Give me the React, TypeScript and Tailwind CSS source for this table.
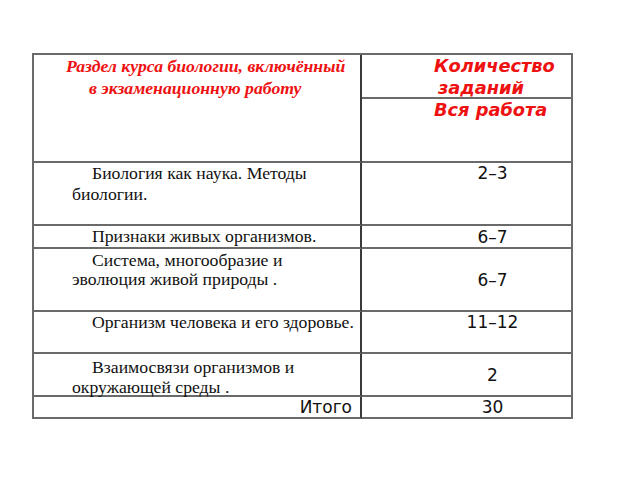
import React from "react";

const serif = "font-['Liberation_Serif','Times_New_Roman',serif]";
const sans = "font-['DejaVu_Sans','Verdana',sans-serif]";

export default function App() {
  return (
    <div className="w-[640px] h-[480px] bg-white pt-[53px] pl-[32px]">
      <div className="grid w-[541px] grid-cols-[328px_211px] grid-rows-[44px_64px_63px_23px_63px_42px_43px_22px] border-t-2 border-l-2 border-[#6a6a6a] text-[#111]">
        {/* header left */}
        <div className={`row-span-2 border-r-2 border-b-2 border-r-[#3a3a3a] border-b-[#6a6a6a] ${serif} text-[17.7px] leading-[22px] font-bold italic text-[#ee1111]`}>
          <div className="pl-[32px] whitespace-nowrap">Раздел курса биологии, включённый</div>
          <div className="pl-[55px] whitespace-nowrap">в экзаменационную работу</div>
        </div>
        {/* header right top */}
        <div className={`border-r-2 border-b-2 border-[#6a6a6a] ${sans} text-[17.8px] leading-[22px] font-bold italic text-[#ee1111] pl-[72px]`}>
          <div>Количество</div>
          <div className="pl-[4px]">заданий</div>
        </div>
        {/* header right bottom */}
        <div className={`border-r-2 border-b-2 border-[#6a6a6a] ${sans} text-[17.8px] leading-[22px] font-bold italic text-[#ee1111] pl-[72px]`}>
          Вся работа
        </div>

        {/* row 1 */}
        <div className={`border-r-2 border-b-2 border-r-[#3a3a3a] border-b-[#6a6a6a] ${serif} text-[17.7px] leading-[21px] pl-[38px] pr-[4px] indent-[20px]`}>
          Биология как наука. Методы биологии.
        </div>
        <div className={`border-r-2 border-b-2 border-[#6a6a6a] ${sans} text-[17px] leading-[20px] text-center pl-[52px]`}>
          2–3
        </div>

        {/* row 2 */}
        <div className={`border-r-2 border-b-2 border-r-[#3a3a3a] border-b-[#6a6a6a] ${serif} text-[17.7px] leading-[21px] pl-[38px] indent-[20px] flex items-center`}>
          <span>Признаки живых организмов.</span>
        </div>
        <div className={`border-r-2 border-b-2 border-[#6a6a6a] ${sans} text-[17px] leading-[20px] pl-[52px] flex items-center justify-center`}>
          6–7
        </div>

        {/* row 3 */}
        <div className={`border-r-2 border-b-2 border-r-[#3a3a3a] border-b-[#6a6a6a] ${serif} text-[17.7px] leading-[19px] pl-[38px] pr-[60px] indent-[20px] pt-[2px]`}>
          Система, многообразие и эволюция живой природы .
        </div>
        <div className={`border-r-2 border-b-2 border-[#6a6a6a] ${sans} text-[17px] leading-[20px] pl-[52px] flex items-center justify-center`}>
          6–7
        </div>

        {/* row 4 */}
        <div className={`border-r-2 border-b-2 border-r-[#3a3a3a] border-b-[#6a6a6a] ${serif} text-[17.7px] leading-[21px] pl-[58px] whitespace-nowrap`}>
          Организм человека и его здоровье.
        </div>
        <div className={`border-r-2 border-b-2 border-[#6a6a6a] ${sans} text-[17px] leading-[20px] text-center pl-[52px]`}>
          11–12
        </div>

        {/* row 5 */}
        <div className={`border-r-2 border-b-2 border-r-[#3a3a3a] border-b-[#6a6a6a] ${serif} text-[17.7px] leading-[20px] pl-[38px] pr-[60px] indent-[20px] pt-[3px]`}>
          Взаимосвязи организмов и окружающей среды .
        </div>
        <div className={`border-r-2 border-b-2 border-[#6a6a6a] ${sans} text-[17px] leading-[20px] pl-[52px] flex items-center justify-center`}>
          2
        </div>

        {/* total */}
        <div className={`border-r-2 border-b-2 border-r-[#3a3a3a] border-b-[#6a6a6a] ${sans} text-[17px] leading-[20px] text-right pr-[8px] flex items-center justify-end`}>
          Итого
        </div>
        <div className={`border-r-2 border-b-2 border-[#6a6a6a] ${sans} text-[17px] leading-[20px] pl-[52px] flex items-center justify-center`}>
          30
        </div>
      </div>
    </div>
  );
}
